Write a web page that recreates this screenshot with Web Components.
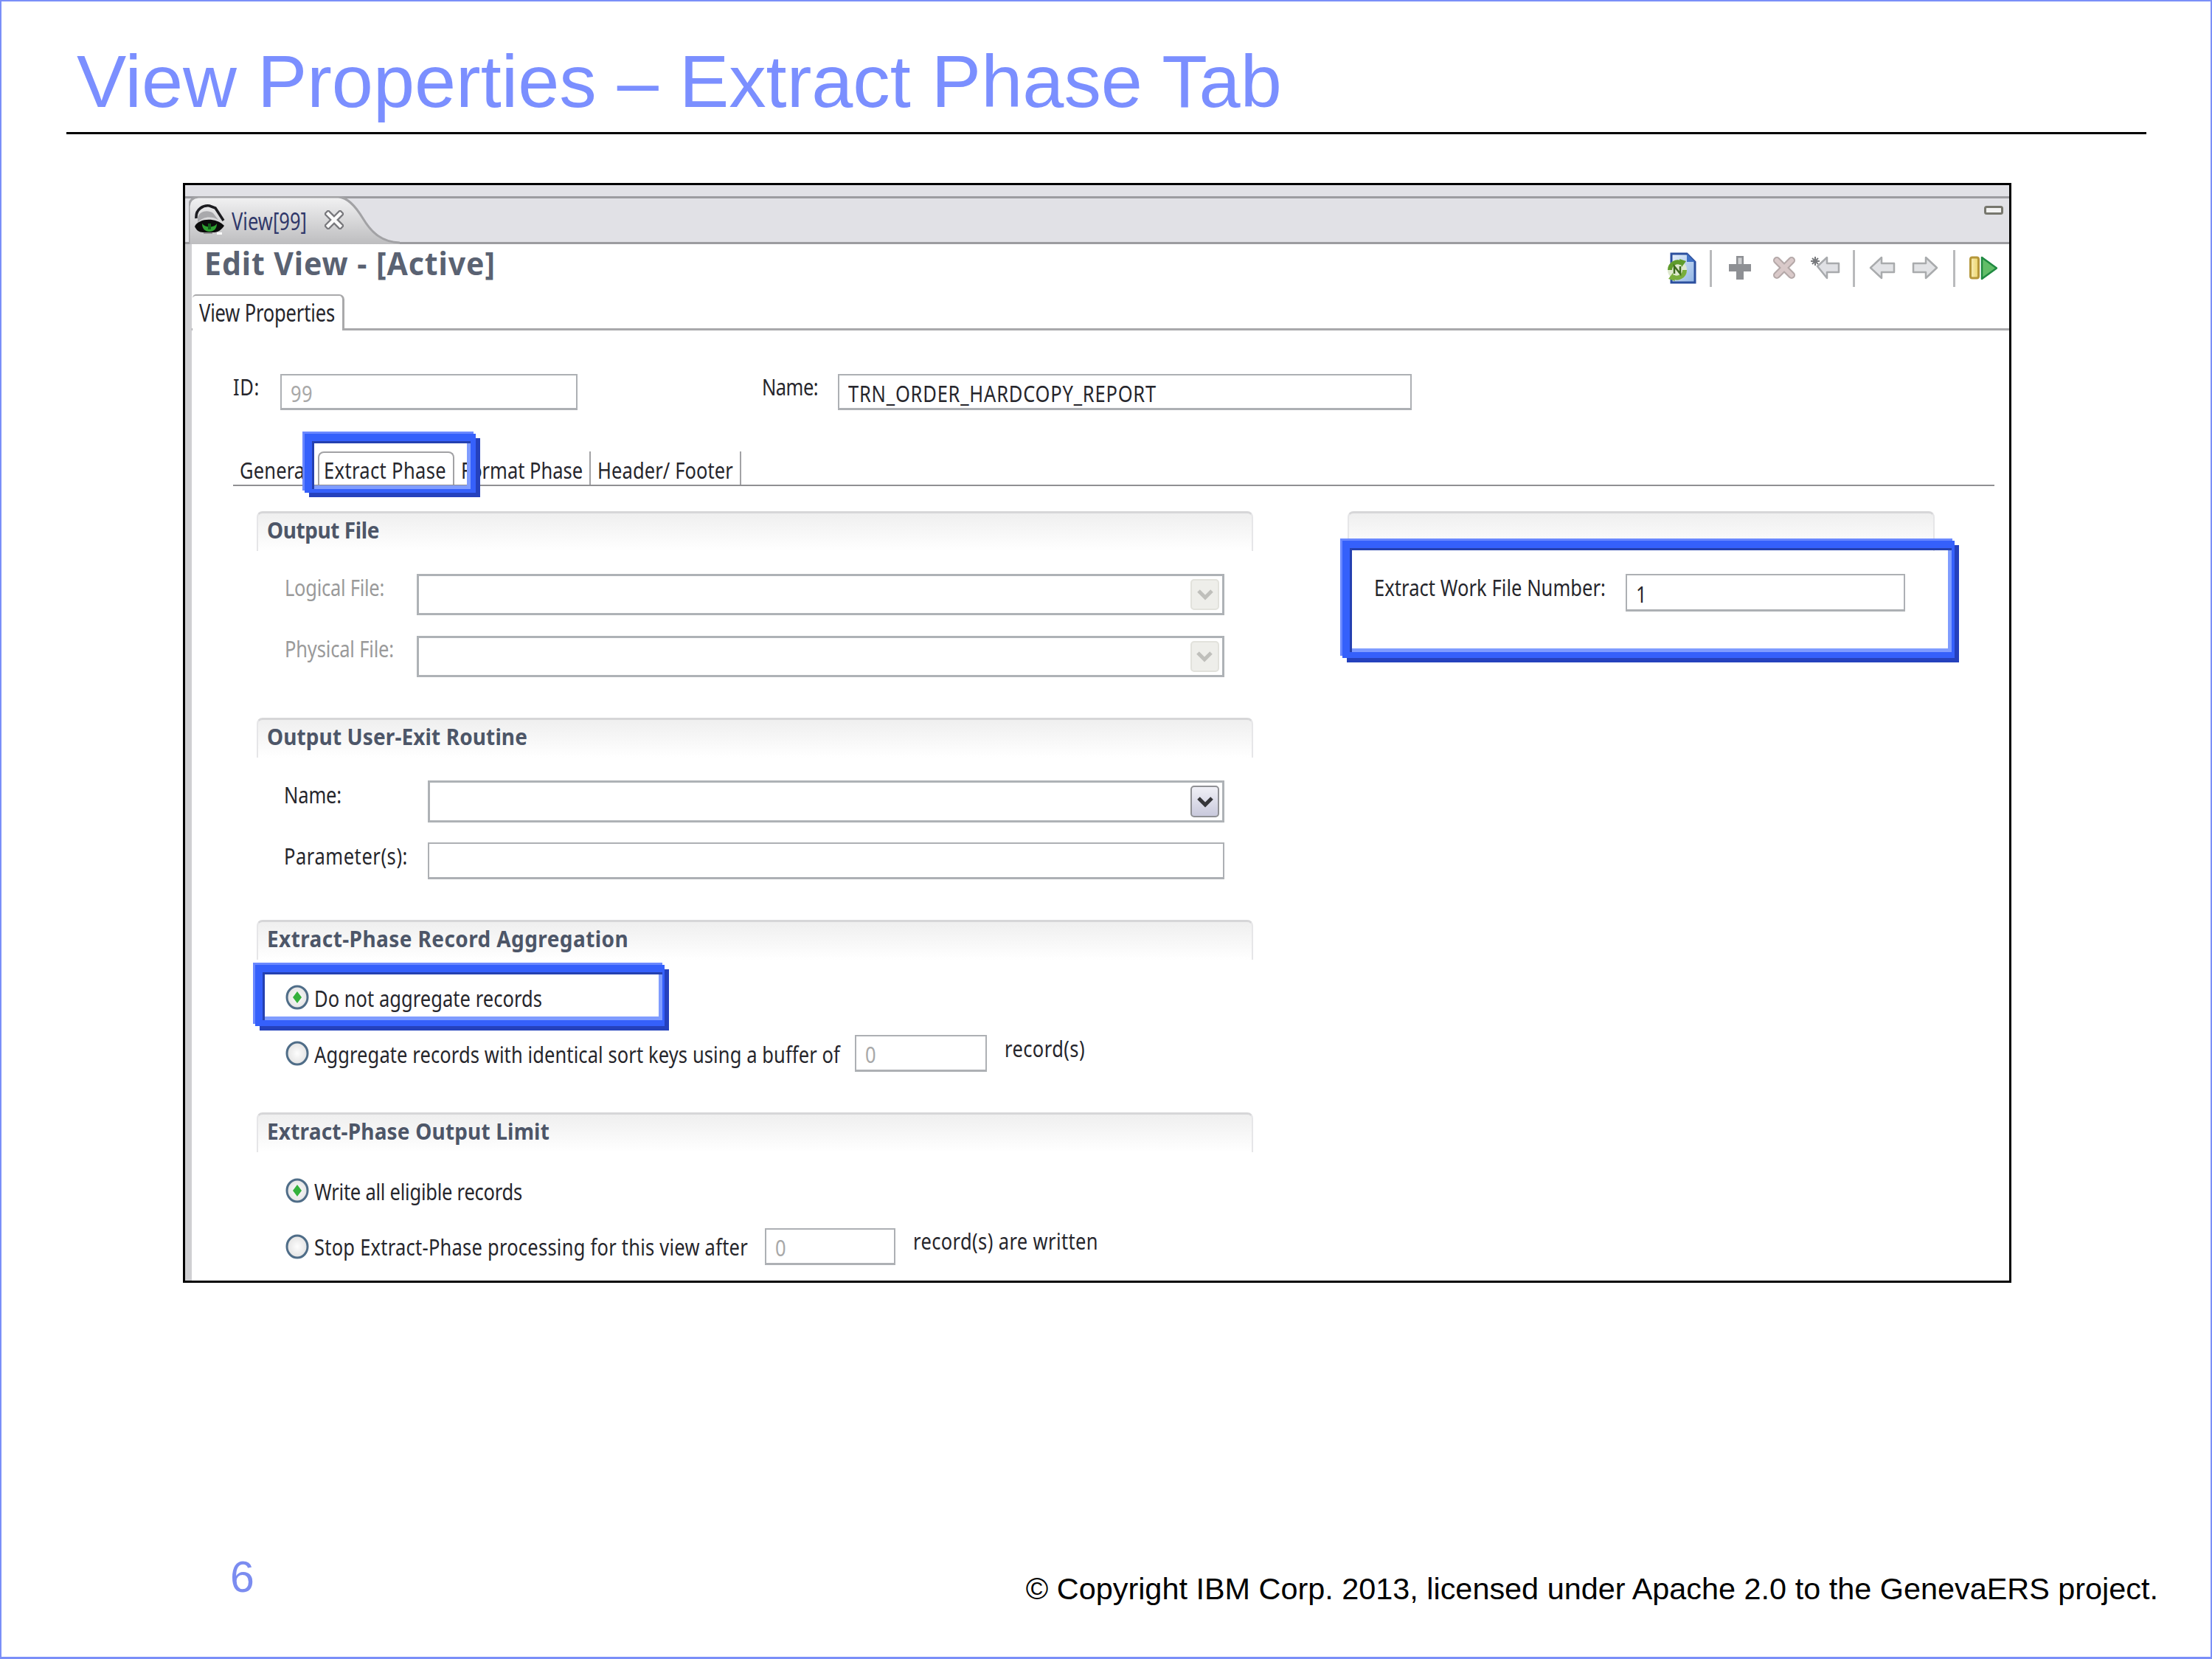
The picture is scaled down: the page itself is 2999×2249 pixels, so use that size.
<!DOCTYPE html>
<html>
<head>
<meta charset="utf-8">
<title>View Properties - Extract Phase Tab</title>
<style>
  html, body { margin: 0; padding: 0; background: #fff; }
</style>
</head>
<body>
<slide-page>
  <span slot="title">View Properties – Extract Phase Tab</span>

  <app-window>
    <editor-header></editor-header>
    <view-tab>View Properties</view-tab>

    <form-row h="49" style="margin-top:59px">
      <ui-text w="36" mb="11">ID:</ui-text>
      <text-box width="403" height="49" disabled style="margin-left:28px"><ui-text w="30" mt="7" color="#a8a8a8">99</ui-text></text-box>
      <ui-text w="76" mb="11" style="margin-left:250px">Name:</ui-text>
      <text-box width="778" height="49" style="margin-left:27px"><ui-text w="418" mt="7">TRN_ORDER_HARDCOPY_REPORT</ui-text></text-box>
    </form-row>

    <sub-tabs>
      <sub-tab><ui-text w="95">General</ui-text></sub-tab>
      <sub-tab active><ui-text w="166">Extract Phase</ui-text></sub-tab>
      <sub-tab sep><ui-text w="165">Format Phase</ui-text></sub-tab>
      <sub-tab sep><ui-text w="184">Header/ Footer</ui-text></sub-tab>
    </sub-tabs>

    <form-columns>
      <group-section slot="left" heading="Output File" heading-w="152" pad="31" gap="28">
        <form-row h="56" style="padding-left:38px">
          <ui-text w="135" mb="16" color="#9a9a9a">Logical File:</ui-text>
          <combo-box width="1095" height="56" disabled style="margin-left:44px"></combo-box>
        </form-row>
        <form-row h="56" style="padding-left:38px">
          <ui-text w="148" mb="18" color="#9a9a9a">Physical File:</ui-text>
          <combo-box width="1095" height="56" disabled style="margin-left:31px"></combo-box>
        </form-row>
      </group-section>

      <group-section slot="left" heading="Output User-Exit Routine" heading-w="353" pad="31" gap="27">
        <form-row h="57" style="padding-left:37px">
          <ui-text w="78" mb="16">Name:</ui-text>
          <combo-box width="1080" height="57" style="margin-left:117px"></combo-box>
        </form-row>
        <form-row h="50" style="padding-left:37px">
          <ui-text w="168" mb="11">Parameter(s):</ui-text>
          <text-box width="1080" height="50" style="margin-left:27px"></text-box>
        </form-row>
      </group-section>

      <group-section slot="left" heading="Extract-Phase Record Aggregation" heading-w="490" pad="26" gap="26">
        <form-row h="50" style="padding-left:39px">
          <radio-option checked w="309">Do not aggregate records</radio-option>
        </form-row>
        <form-row h="50" style="padding-left:39px">
          <radio-option w="713">Aggregate records with identical sort keys using a buffer of</radio-option>
          <text-box width="179" height="50" disabled style="margin-left:20px"><ui-text mt="7" color="#a8a8a8">0</ui-text></text-box>
          <ui-text w="109" mb="10" style="margin-left:24px">record(s)</ui-text>
        </form-row>
      </group-section>

      <group-section slot="left" heading="Extract-Phase Output Limit" heading-w="383" pad="27" gap="26">
        <form-row h="50" style="padding-left:39px">
          <radio-option checked w="282">Write all eligible records</radio-option>
        </form-row>
        <form-row h="50" style="padding-left:39px">
          <radio-option w="588" mt="3">Stop Extract-Phase processing for this view after</radio-option>
          <text-box width="177" height="50" disabled style="margin-left:23px"><ui-text mt="7" color="#a8a8a8">0</ui-text></text-box>
          <ui-text w="251" mb="12" style="margin-left:24px">record(s) are written</ui-text>
        </form-row>
      </group-section>

      <group-section slot="right" pad="31" gap="0">
        <form-row h="51" style="padding-left:36px">
          <ui-text w="314" mb="12">Extract Work File Number:</ui-text>
          <text-box width="379" height="51" style="margin-left:27px"><ui-text mt="7">1</ui-text></text-box>
        </form-row>
      </group-section>
    </form-columns>
  </app-window>

  <span slot="number">6</span>
  <span slot="copyright">© Copyright IBM Corp. 2013, licensed under Apache 2.0 to the GenevaERS project.</span>

  <!-- the blue boxes sit over the screenshot -->
  <call-out x="413" y="588" w="232" h="80" br="7" bb="5"></call-out>
  <call-out x="1820" y="733" w="830" h="159" br="4" bb="8"></call-out>
  <call-out x="346" y="1308" w="555" h="83" br="3" bb="8"></call-out>
</slide-page>

<script>
// Text that is squeezed to a given width and stretched upward, like the scaled up screenshot
class UiText extends HTMLElement {
  constructor() {
    super();
    this.attachShadow({ mode: 'open' });
    this.shadowRoot.innerHTML = `
      <style>
        :host {
          display: inline-flex;
          flex: none;
          --lh: 30px;
          line-height: var(--lh);
          font-family: "Noto Sans", "Open Sans", sans-serif;
          font-size: var(--fs, 25.5px);
          color: var(--color, #26262c);
          white-space: nowrap;
        }
        span {
          display: inline-block;
          transform: scaleY(var(--sy, 1.2));
          transform-origin: 0 calc(var(--lh) / 2 + var(--fs, 25.5px) * 0.388);
        }
      </style>
      <span><slot></slot></span>
    `;
  }

  connectedCallback() {
    const s = this.style;
    if (this.hasAttribute('fs')) s.setProperty('--fs', this.getAttribute('fs') + 'px');
    if (this.hasAttribute('sy')) s.setProperty('--sy', this.getAttribute('sy'));
    if (this.hasAttribute('color')) s.setProperty('--color', this.getAttribute('color'));
    if (this.hasAttribute('lh')) s.setProperty('--lh', this.getAttribute('lh') + 'px');
    if (this.hasAttribute('bold')) s.fontWeight = 'bold';
    if (this.hasAttribute('mb')) s.marginBottom = this.getAttribute('mb') + 'px';
    if (this.hasAttribute('mt')) s.marginTop = this.getAttribute('mt') + 'px';

    // fit to the wanted width with letter spacing
    if (this.hasAttribute('w')) {
      const span = this.shadowRoot.querySelector('span');
      const slot = this.shadowRoot.querySelector('slot');
      const text = slot.assignedNodes({ flatten: true }).map(n => n.textContent).join('').trim();
      const diff = Number(this.getAttribute('w')) - span.getBoundingClientRect().width;
      s.letterSpacing = (diff / text.length).toFixed(3) + 'px';
    }
  }
}

class SlidePage extends HTMLElement {
  constructor() {
    super();
    this.attachShadow({ mode: 'open' });
    this.shadowRoot.innerHTML = `
      <style>
        :host {
          display: flex;
          flex-direction: column;
          position: relative;
          box-sizing: border-box;
          width: 2999px;
          height: 2249px;
          overflow: hidden;
          background: #fff;
          border: solid #7b8ff8;
          border-width: 2px 2px 3px 2px;
          font-family: "Liberation Sans", Arial, sans-serif;
        }
        .title {
          margin: 48px 0 0 102px;
          font-size: 100.9px;
          line-height: 120px;
          color: #7b8fff;
          white-space: nowrap;
        }
        .rule {
          height: 3px;
          margin: 9px 87px 66px 88px;
          background: #000;
        }
        .shot { display: block; margin-left: 246px; }
        footer {
          margin-top: auto;
          display: flex;
          align-items: flex-end;
          padding: 0 71px 0 310px;
        }
        .number {
          font-size: 59px;
          line-height: 70px;
          color: #7b8cf0;
          margin-bottom: 73px;
        }
        .copyright {
          margin-left: auto;
          font-size: 41.4px;
          line-height: 52px;
          color: #000;
          margin-bottom: 66px;
          white-space: nowrap;
        }
      </style>
      <div class="title"><slot name="title"></slot></div>
      <div class="rule"></div>
      <div class="shot"><slot></slot></div>
      <footer>
        <div class="number"><slot name="number"></slot></div>
        <div class="copyright"><slot name="copyright"></slot></div>
      </footer>
    `;
  }
}

// The framed eclipse screenshot with its editor tab on top
class AppWindow extends HTMLElement {
  constructor() {
    super();
    this.attachShadow({ mode: 'open' });
    this.shadowRoot.innerHTML = `
      <style>
        :host {
          display: block;
          box-sizing: border-box;
          width: 2479px;
          height: 1491px;
          border: 3px solid #000;
          overflow: hidden;
          background: #fff;
        }
        .bar {
          position: relative;
          box-sizing: border-box;
          height: 80px;
          background: #e1e1e6;
          border-top: 3px solid transparent;
        }
        .bar::before, .bar::after {
          content: "";
          position: absolute;
          left: 0; right: 0;
          height: 3px;
          background: #9c9ca0;
        }
        .bar::before { top: 12px; }
        .bar::after { bottom: 0; }
        .tab {
          position: absolute;
          left: 5px; top: 12px;
          width: 286px; height: 65px;
          z-index: 1;
          display: flex;
          align-items: flex-start;
        }
        .tab > svg.shape { position: absolute; left: 0; top: 0; }
        .eye { position: relative; margin: 10px 0 0 8px; }
        .tab ui-text { position: relative; margin: 21px 0 0 9px; }
        .close { position: relative; margin: 19px 0 0 24px; }
        .min { position: absolute; right: 8px; top: 25px; }
        .body {
          border-left: 9px solid #cfcfd2;
          height: 1411px;
          overflow: hidden;
        }
      </style>
      <div class="bar">
        <div class="tab">
          <svg class="shape" width="286" height="65" viewBox="0 0 286 65">
            <defs>
              <linearGradient id="tabfill" x1="0" y1="0" x2="0" y2="1">
                <stop offset="0" stop-color="#f2f2f3"/>
                <stop offset="1" stop-color="#bdbdbf"/>
              </linearGradient>
            </defs>
            <path d="M0 65V14Q1 2 13 1H203C215 2 225 12 236 30C248 50 262 62 286 63V65Z" fill="url(#tabfill)"/>
            <path d="M0 65V14Q1 2 13 1H203C215 2 225 12 236 30C248 50 262 62 286 63" fill="none" stroke="#a2a2a5" stroke-width="3"/>
          </svg>
          <svg class="eye" width="41" height="43" viewBox="0 0 41 43">
            <path d="M2 20C1 7 12 2 20 3L28 6L39 23" fill="none" stroke="#1c1c20" stroke-width="3.500"/>
            <path d="M4 19C6 10 18 8 25 13L32 22C22 16 10 18 4 26Z" fill="#a9a9ac"/>
            <path d="M0 31C5 20 28 18 40 30C37 35 31 39 27 39H11C6 39 2 36 0 31Z" fill="#0c0c0c"/>
            <path d="M10 27C14 33 27 33 30 27C30 34 26 38 20 38C14 38 10 34 10 27Z" fill="#2fa332"/>
            <path d="M18 27h4v8h-4z" fill="#12621a"/>
            <path d="M30 39h7v3h-7z" fill="#fff"/>
            <path d="M12 39h12v2H12z" fill="#8e8e8e"/>
          </svg>
          <ui-text w="102" sy="1.3" color="#30386a">View[99]</ui-text>
          <svg class="close" width="26" height="26" viewBox="0 0 26 26">
            <path d="M5 5L21 21M21 5L5 21" stroke="#77777b" stroke-width="9" stroke-linecap="square"/>
            <path d="M5 5L21 21M21 5L5 21" stroke="#fbfbfb" stroke-width="4.500" stroke-linecap="square"/>
          </svg>
        </div>
        <svg class="min" width="26" height="12" viewBox="0 0 26 12">
          <rect x="1.500" y="1.500" width="23" height="9" rx="2" fill="#f3f3f3" stroke="#77776e" stroke-width="3"/>
        </svg>
      </div>
      <div class="body"><slot></slot></div>
    `;
  }
}

// "Edit View - [Active]" and the row of tool icons
class EditorHeader extends HTMLElement {
  constructor() {
    super();
    this.attachShadow({ mode: 'open' });
    this.shadowRoot.innerHTML = `
      <style>
        :host {
          display: flex;
          box-sizing: border-box;
          height: 68px;
          padding: 1px 16px 0 17px;
        }
        .tools { display: flex; align-items: flex-start; margin-left: auto; }
        .tools svg { display: block; flex: none; }
        .sep { width: 3px; height: 50px; margin-top: 7px; background: #b9babc; flex: none; }
      </style>
      <ui-text w="395" fs="41" sy="1.05" lh="50" bold color="#5a6272">Edit View - [Active]</ui-text>
      <div class="tools">
        <svg width="40" height="43" viewBox="0 0 40 43" style="margin-top:10px">
          <defs>
            <linearGradient id="doc" x1="0" y1="0" x2="1" y2="1">
              <stop offset="0" stop-color="#e6effa"/>
              <stop offset="1" stop-color="#8fb4e4"/>
            </linearGradient>
          </defs>
          <path d="M6 2H27L38 13V41H6Z" fill="url(#doc)" stroke="#2b4f9e" stroke-width="3"/>
          <path d="M27 2V13H38Z" fill="#3f70c4"/>
          <circle cx="14" cy="24" r="13" fill="#dfe9cf"/>
          <path d="M4 24A10.500 10.500 0 0 1 20 15" fill="none" stroke="#5f9c2c" stroke-width="6"/>
          <path d="M24 24A10.500 10.500 0 0 1 8 33" fill="none" stroke="#79ae3c" stroke-width="6"/>
          <path d="M17 9L26 12L20 20Z" fill="#5f9c2c"/>
          <path d="M11 39L2 36L8 28Z" fill="#79ae3c"/>
          <path d="M10 29V19L18 29V19" fill="none" stroke="#3d6a1e" stroke-width="2.500"/>
        </svg>
        <div class="sep" style="margin-left:18px"></div>
        <svg width="30" height="32" viewBox="0 0 30 32" style="margin-left:23px;margin-top:15px">
          <path d="M10 0H20V11H30V21H20V32H10V21H0V11H10Z" fill="#8e9094"/>
          <path d="M12.500 2.500H17.500V11H12.500Z" fill="#cfd0d2"/>
        </svg>
        <svg width="32" height="32" viewBox="0 0 32 32" style="margin-left:29px;margin-top:15px">
          <path d="M6 6L26 26M26 6L6 26" stroke="#b4a8a8" stroke-width="10" stroke-linecap="round"/>
          <path d="M6 6L26 26M26 6L6 26" stroke="#d9c9c9" stroke-width="6" stroke-linecap="round"/>
        </svg>
        <svg width="41" height="32" viewBox="0 0 41 32" style="margin-left:19px;margin-top:15px">
          <path d="M10 14L23 2V10H39V22H23V30Z" fill="#e0e1e5" stroke="#a8aaad" stroke-width="2.500" stroke-linejoin="round"/>
          <path d="M7 1V13M1 7H13M3 3L11 11M11 3L3 11" stroke="#77797c" stroke-width="2"/>
        </svg>
        <div class="sep" style="margin-left:17px"></div>
        <svg width="36" height="32" viewBox="0 0 36 32" style="margin-left:19px;margin-top:15px">
          <path d="M2 16L17 2V10H34V22H17V30Z" fill="#e2e3e6" stroke="#a9abad" stroke-width="2.500" stroke-linejoin="round"/>
        </svg>
        <svg width="36" height="32" viewBox="0 0 36 32" style="margin-left:22px;margin-top:15px">
          <path d="M34 16L19 2V10H2V22H19V30Z" fill="#e2e3e6" stroke="#a9abad" stroke-width="2.500" stroke-linejoin="round"/>
        </svg>
        <div class="sep" style="margin-left:20px"></div>
        <svg width="38" height="33" viewBox="0 0 38 33" style="margin-left:19px;margin-top:15px">
          <defs>
            <linearGradient id="bar" x1="0" y1="0" x2="1" y2="0">
              <stop offset="0" stop-color="#f8efb8"/>
              <stop offset="1" stop-color="#ecd36a"/>
            </linearGradient>
          </defs>
          <rect x="1.500" y="2" width="11" height="28" rx="2.500" fill="url(#bar)" stroke="#b5973a" stroke-width="3"/>
          <path d="M17 2V31L37 16.500Z" fill="#62bd68" stroke="#1f8a41" stroke-width="2.500" stroke-linejoin="round"/>
        </svg>
      </div>
    `;
  }
}

class ViewTab extends HTMLElement {
  constructor() {
    super();
    this.attachShadow({ mode: 'open' });
    this.shadowRoot.innerHTML = `
      <style>
        :host {
          display: flex;
          box-sizing: border-box;
          height: 49px;
          border-bottom: 3px solid #a9a9ab;
        }
        .tab {
          display: flex;
          box-sizing: border-box;
          height: 49px;
          width: 206px;
          margin-left: 1px;
          padding: 10px 0 0 9px;
          background: #fff;
          border: solid #a9a9ab;
          border-width: 2px 3px 0 0;
          border-radius: 5px 7px 0 0;
        }
      </style>
      <div class="tab"><ui-text w="184" sy="1.25"><slot></slot></ui-text></div>
    `;
  }
}

class FormRow extends HTMLElement {
  constructor() {
    super();
    this.attachShadow({ mode: 'open' });
    this.shadowRoot.innerHTML = `
      <style>
        :host { display: flex; align-items: center; }
      </style>
      <slot></slot>
    `;
  }

  connectedCallback() {
    this.style.height = this.getAttribute('h') + 'px';
    if (!this.style.marginLeft && this.parentElement && this.parentElement.tagName === 'APP-WINDOW') {
      this.style.marginLeft = '56px';
    }
  }
}

class TextBox extends HTMLElement {
  constructor() {
    super();
    this.attachShadow({ mode: 'open' });
    this.shadowRoot.innerHTML = `
      <style>
        :host {
          display: flex;
          flex: none;
          align-items: center;
          box-sizing: border-box;
          padding-left: 12px;
          background: #fff;
          border: 2px solid #adb0b4;
          border-bottom-width: 3px;
        }
      </style>
      <slot></slot>
    `;
  }

  connectedCallback() {
    this.style.width = this.getAttribute('width') + 'px';
    this.style.height = this.getAttribute('height') + 'px';
  }
}

class ComboBox extends HTMLElement {
  constructor() {
    super();
    this.attachShadow({ mode: 'open' });
    this.shadowRoot.innerHTML = `
      <style>
        :host {
          display: flex;
          flex: none;
          justify-content: flex-end;
          align-items: center;
          box-sizing: border-box;
          padding-right: 4px;
          background: #fff;
          border: 3px solid #aeb2b6;
        }
        .btn {
          box-sizing: border-box;
          width: 39px;
          height: calc(100% - 8px);
          display: flex;
          align-items: center;
          justify-content: center;
          border: 2px solid #8f9094;
          border-radius: 5px;
          background: linear-gradient(#f0f0f6, #c9c9dc);
        }
        :host([disabled]) .btn {
          border-color: #e2e2dc;
          background: #eeeeea;
        }
        path { stroke: #36363a; }
        :host([disabled]) path { stroke: #bfbfbb; }
      </style>
      <div class="btn">
        <svg width="24" height="16" viewBox="0 0 24 16">
          <path d="M3 3L12 12L21 3" fill="none" stroke-width="5"/>
        </svg>
      </div>
    `;
  }

  connectedCallback() {
    this.style.width = this.getAttribute('width') + 'px';
    this.style.height = this.getAttribute('height') + 'px';
  }
}

class SubTabs extends HTMLElement {
  constructor() {
    super();
    this.attachShadow({ mode: 'open' });
    this.shadowRoot.innerHTML = `
      <style>
        :host {
          display: flex;
          align-items: stretch;
          box-sizing: border-box;
          height: 47px;
          margin: 56px 20px 0 56px;
          border-bottom: 2px solid #8f8f92;
        }
      </style>
      <slot></slot>
    `;
  }
}

class SubTab extends HTMLElement {
  constructor() {
    super();
    this.attachShadow({ mode: 'open' });
    this.shadowRoot.innerHTML = `
      <style>
        :host {
          display: flex;
          align-items: flex-end;
          box-sizing: border-box;
          padding: 0 11px 3px 9px;
        }
        :host([sep]) { border-right: 2px solid #a2a2a5; padding-right: 9px; }
        :host([active]) {
          padding: 0 9px 3px 6px;
          border: solid #a2a2a5;
          border-width: 2px 2px 0 2px;
          border-radius: 8px 8px 0 0;
        }
      </style>
      <slot></slot>
    `;
  }
}

class FormColumns extends HTMLElement {
  constructor() {
    super();
    this.attachShadow({ mode: 'open' });
    this.shadowRoot.innerHTML = `
      <style>
        :host {
          display: flex;
          gap: 128px;
          margin: 34px 0 0 88px;
        }
        .left { display: flex; flex-direction: column; gap: 55px; width: 1351px; }
        .right { width: 796px; }
      </style>
      <div class="left"><slot name="left"></slot></div>
      <div class="right"><slot name="right"></slot></div>
    `;
  }
}

class GroupSection extends HTMLElement {
  constructor() {
    super();
    this.attachShadow({ mode: 'open' });
    const heading = this.getAttribute('heading') || '';
    const w = this.getAttribute('heading-w');
    this.shadowRoot.innerHTML = `
      <style>
        :host { display: block; }
        .head {
          box-sizing: border-box;
          height: 54px;
          padding: 8px 0 0 12px;
          border: solid;
          border-width: 3px 2px 0 2px;
          border-color: #d6d6d8 #e6e6e8 transparent #e6e6e8;
          border-radius: 8px 8px 0 0;
          background: linear-gradient(#efefef, #fff);
        }
        .body { display: flex; flex-direction: column; }
      </style>
      <div class="head">${heading ? `<ui-text bold fs="28" sy="1.1" w="${w}" color="#4d5668">${heading}</ui-text>` : ''}</div>
      <div class="body"><slot></slot></div>
    `;
  }

  connectedCallback() {
    const body = this.shadowRoot.querySelector('.body');
    body.style.paddingTop = this.getAttribute('pad') + 'px';
    body.style.gap = this.getAttribute('gap') + 'px';
  }
}

class RadioOption extends HTMLElement {
  constructor() {
    super();
    this.attachShadow({ mode: 'open' });
    const w = this.getAttribute('w');
    const mt = this.getAttribute('mt') || '5';
    const dot = this.hasAttribute('checked')
      ? '<path d="M16 9L22 17L16 25L10 17Z" fill="#34b13c"/>'
      : '';
    this.shadowRoot.innerHTML = `
      <style>
        :host { display: flex; align-items: center; flex: none; }
        svg { flex: none; margin-right: 7px; }
      </style>
      <svg width="32" height="34" viewBox="0 0 32 34">
        <defs>
          <radialGradient id="fill" cx="0.5" cy="0.5" r="0.6">
            <stop offset="0" stop-color="#fdfdfd"/>
            <stop offset="1" stop-color="#dedede"/>
          </radialGradient>
        </defs>
        <ellipse cx="16" cy="17" rx="14" ry="15" fill="url(#fill)" stroke="#4f6d88" stroke-width="3"/>
        ${dot}
      </svg>
      <ui-text w="${w}" mt="${mt}"><slot></slot></ui-text>
    `;
  }
}

// Blue bevelled box, laid over the screenshot at its place on the slide
class CallOut extends HTMLElement {
  constructor() {
    super();
    this.attachShadow({ mode: 'open' });
    this.shadowRoot.innerHTML = `
      <style>
        :host {
          display: block;
          position: absolute;
          box-sizing: border-box;
          border: 10px solid #3560fb;
          box-shadow:
            6px 6px 0 #2541bd,
            -3px -3px 0 #6a88ff,
            inset 3px 3px 0 #2440b0,
            inset -5px -5px 0 #7f9cff;
        }
      </style>
    `;
  }

  connectedCallback() {
    // page has a 2px border, so subtract it
    this.style.left = (this.getAttribute('x') - 2) + 'px';
    this.style.top = (this.getAttribute('y') - 2) + 'px';
    this.style.width = this.getAttribute('w') + 'px';
    this.style.height = this.getAttribute('h') + 'px';
    // the bevel is thinner on the right and at the bottom
    this.style.borderRightWidth = this.getAttribute('br') + 'px';
    this.style.borderBottomWidth = this.getAttribute('bb') + 'px';
  }
}

// Register the elements, the small ones first
customElements.define('ui-text', UiText);
customElements.define('text-box', TextBox);
customElements.define('combo-box', ComboBox);
customElements.define('form-row', FormRow);
customElements.define('radio-option', RadioOption);
customElements.define('group-section', GroupSection);
customElements.define('form-columns', FormColumns);
customElements.define('sub-tab', SubTab);
customElements.define('sub-tabs', SubTabs);
customElements.define('view-tab', ViewTab);
customElements.define('editor-header', EditorHeader);
customElements.define('app-window', AppWindow);
customElements.define('call-out', CallOut);
customElements.define('slide-page', SlidePage);
</script>
</body>
</html>
